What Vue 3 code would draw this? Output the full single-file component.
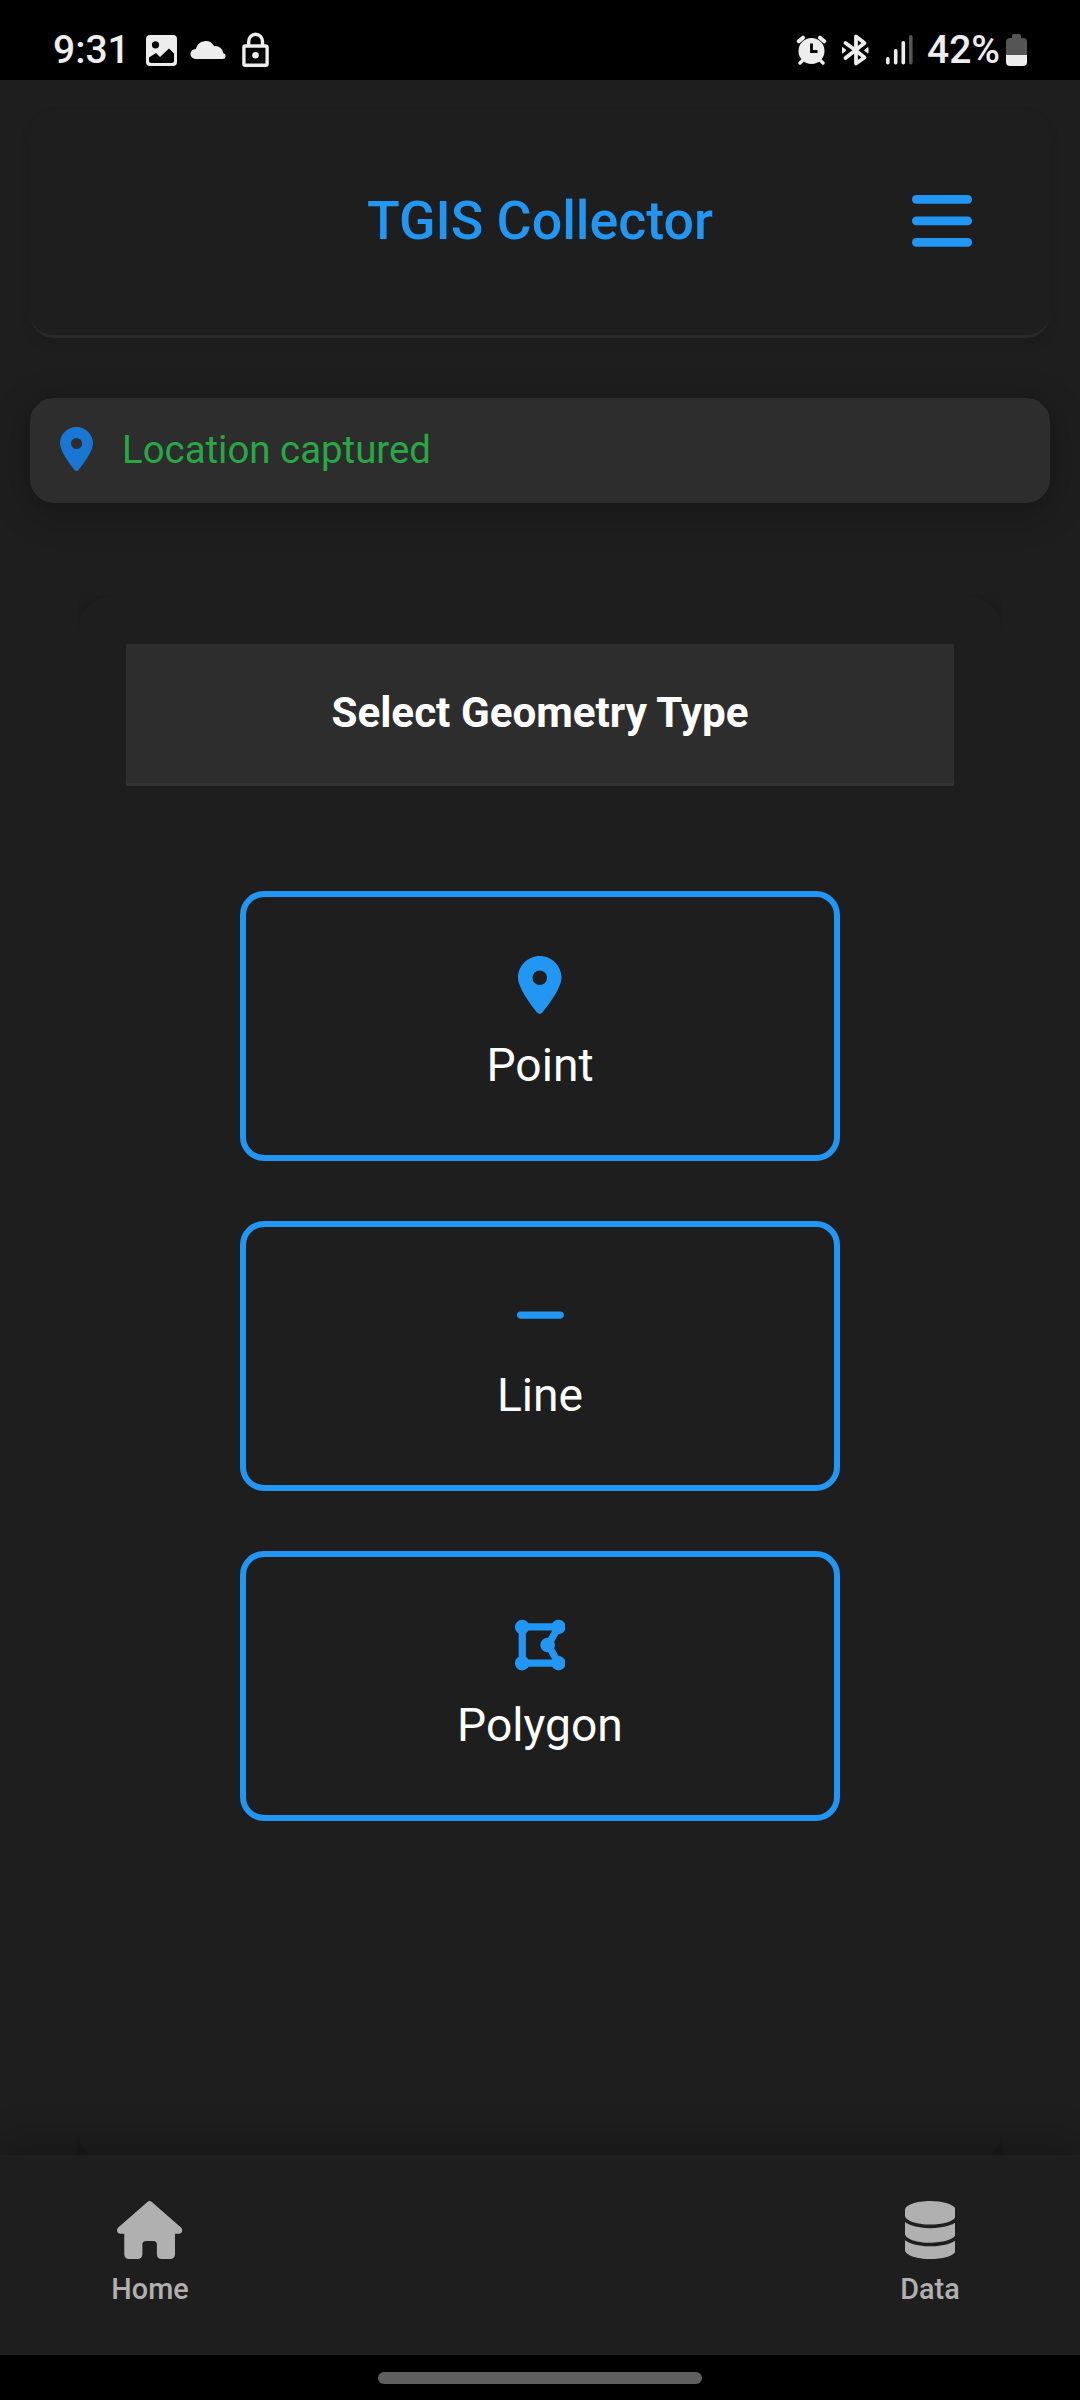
<script setup>
const pin = {
  viewBox: '0 0 384 512',
  width: 43.5,
  d: 'M215.7 499.2C267 435 384 279.4 384 192C384 86 298 0 192 0S0 86 0 192c0 87.4 117 243 168.3 307.2c12.3 15.3 35.1 15.3 47.4 0zM192 128a64 64 0 1 1 0 128 64 64 0 1 1 0-128z',
}

const geometries = [
  { label: 'Point', icon: pin },
  {
    label: 'Line',
    icon: {
      viewBox: '0 0 448 512',
      width: 50.75,
      d: 'M432 256c0 17.7-14.3 32-32 32L48 288c-17.7 0-32-14.3-32-32s14.3-32 32-32l352 0c17.7 0 32 14.3 32 32z',
    },
  },
  {
    label: 'Polygon',
    icon: {
      viewBox: '0 0 448 512',
      width: 50.75,
      d: 'M96 151.4V360.6c9.7 5.6 17.8 13.7 23.4 23.4H328.6c0-.1 .1-.2 .1-.3l-4.5-7.9-32-56 0 0c-1.4 .1-2.8 .1-4.2 .1c-35.3 0-64-28.7-64-64s28.7-64 64-64c1.4 0 2.8 0 4.2 .1l0 0 32-56 4.5-7.9-.1-.3H119.4c-5.6 9.7-13.7 17.8-23.4 23.4zM384.3 352c35.2 .2 63.7 28.7 63.7 64c0 35.3-28.7 64-64 64c-23.7 0-44.4-12.9-55.4-32H119.4c-11.1 19.1-31.7 32-55.4 32c-35.3 0-64-28.7-64-64c0-23.7 12.9-44.4 32-55.4V151.4C12.9 140.4 0 119.7 0 96C0 60.7 28.7 32 64 32c23.7 0 44.4 12.9 55.4 32H328.6c11.1-19.1 31.7-32 55.4-32c35.3 0 64 28.7 64 64c0 35.3-28.5 63.8-63.7 64l-4.5 7.9-32 56-2.3 4c4.2 8.5 6.5 18 6.5 28.1s-2.3 19.6-6.5 28.1l2.3 4 32 56 4.5 7.9z',
    },
  },
]

const tabs = [
  {
    label: 'Home',
    viewBox: '0 0 576 512',
    width: 65.25,
    d: 'M266 10Q288-8 310 10L565 233Q576 243 576 256A32 32 0 0 1 544 288H512V472A40 40 0 0 1 472 512H392A40 40 0 0 1 352 472V384A32 32 0 0 0 320 352H256A32 32 0 0 0 224 384V472A40 40 0 0 1 184 512H104A40 40 0 0 1 64 472V288H32A32 32 0 0 1 0 256Q0 243 11 233Z',
  },
  {
    label: 'Data',
    viewBox: '0 0 448 512',
    width: 50.75,
    d: 'M448 80v48c0 44.2-100.3 80-224 80S0 172.2 0 128V80C0 35.8 100.3 0 224 0S448 35.8 448 80zM393.2 214.7c20.8-7.4 39.9-16.9 54.8-28.6V288c0 44.2-100.3 80-224 80S0 332.2 0 288V186.1c14.9 11.8 34 21.2 54.8 28.6C99.7 230.7 159.5 240 224 240s124.3-9.3 169.2-25.3zM0 346.1c14.9 11.8 34 21.2 54.8 28.6C99.7 390.7 159.5 400 224 400s124.3-9.3 169.2-25.3c20.8-7.4 39.9-16.9 54.8-28.6V432c0 44.2-100.3 80-224 80S0 476.2 0 432V346.1z',
  },
]
</script>

<template>
  <div class="screen">
    <div class="status">
      <span class="clock">9:31</span>
      <svg class="st-left" width="126" height="40" viewBox="144 30 126 40" fill="#ededed">
        <path fill-rule="evenodd" d="M150 35h23a4 4 0 0 1 4 4v23a4 4 0 0 1-4 4h-23a4 4 0 0 1-4-4V39a4 4 0 0 1 4-4zM155.500 41.200a3.600 3.600 0 1 0 0 7.200a3.600 3.600 0 0 0 0-7.200zM149 57.500V60.500a2.500 2.500 0 0 0 2.500 2.500h20a2.500 2.500 0 0 0 2.500-2.500V53.500l-5-5-9 8.500-4-4z" />
        <path d="M195.500 59a5 5 0 0 1-.1-10q.3 0 .6-.2a9.800 9.800 0 0 1 18.200-2.600a8 8 0 0 1 9.200 7a2.950 2.950 0 0 1-.4 5.800z" />
        <g fill="none" stroke="#ededed" stroke-width="3.400">
          <rect x="243.900" y="46" width="23.200" height="19.300" rx="1.500" />
          <path d="M248.700 46v-4.500a6.900 7.300 0 0 1 13.800 0v4.500" />
        </g>
        <circle cx="255.500" cy="55.300" r="3.300" />
      </svg>
      <svg class="st-right" width="118" height="40" viewBox="796 30 118 40" fill="#ededed">
        <circle cx="811.500" cy="51" r="13" />
        <path d="M802.500 60.500l-2.500 2.500M820.500 60.500l2.500 2.500" stroke="#ededed" stroke-width="3.500" stroke-linecap="round" />
        <path d="M798.800 41.300l4.200-3.600M824.200 41.300l-4.200-3.600" stroke="#ededed" stroke-width="4" stroke-linecap="round" />
        <path d="M811.500 43.500v8h6" fill="none" stroke="#000" stroke-width="2.800" />
        <path d="M845.500 43L855.500 50.200L864.500 57.500L856 63.500V36.500L864.500 43L855.500 50.200L845.500 58" fill="none" stroke="#ededed" stroke-width="3.800" stroke-linejoin="round" stroke-linecap="round" />
        <path d="M842.500 47.500l3.500 2.800-3.500 2.800zM868 47.500l-3.500 2.800 3.500 2.800z" stroke="#ededed" stroke-width="1" stroke-linejoin="round" />
        <rect x="886" y="57" width="3.600" height="7.500" rx="1.700" />
        <rect x="893.900" y="49" width="3.600" height="15.500" rx="1.700" />
        <rect x="901.500" y="41" width="3.600" height="23.500" rx="1.700" />
        <rect x="909" y="35" width="3.600" height="29.500" rx="1.700" fill="#555" />
      </svg>
      <span class="percent">42%</span>
      <svg class="battery" width="21" height="32" viewBox="0 0 21 32">
        <path d="M6 4V1.500A1.500 1.500 0 0 1 7.500 0h6A1.500 1.500 0 0 1 15 1.500V4h2a4 4 0 0 1 4 4v13H0V8a4 4 0 0 1 4-4z" fill="#555" />
        <path d="M0 21h21v7a4 4 0 0 1-4 4H4a4 4 0 0 1-4-4z" fill="#ededed" />
      </svg>
    </div>

    <header class="header">
      <h1 class="title">TGIS Collector</h1>
      <svg class="menu" width="60" height="52" viewBox="0 0 60 52" fill="#2196f3">
        <rect width="60" height="8.700" rx="4.300" />
        <rect y="21.600" width="60" height="8.700" rx="4.300" />
        <rect y="43" width="60" height="8.700" rx="4.300" />
      </svg>
    </header>

    <div class="location">
      <svg class="loc-pin" width="33" height="44" :viewBox="pin.viewBox"><path :d="pin.d" fill="#1976d2" /></svg>
      <span class="loc-text">Location captured</span>
    </div>

    <div class="clip">
      <main class="card">
        <h2 class="card-head">Select Geometry Type</h2>
        <div class="options">
          <button v-for="g in geometries" :key="g.label" class="option">
            <svg :width="g.icon.width" height="58" :viewBox="g.icon.viewBox"><path :d="g.icon.d" fill="#2196f3" /></svg>
            <span class="option-label">{{ g.label }}</span>
          </button>
        </div>
      </main>
    </div>

    <nav class="nav">
      <div v-for="t in tabs" :key="t.label" class="tab">
        <svg :width="t.width" height="58" :viewBox="t.viewBox"><path :d="t.d" fill="#b0b0b0" /></svg>
        <span class="tab-label">{{ t.label }}</span>
      </div>
    </nav>
    <div class="gesture"><div class="pill"></div></div>
  </div>
</template>

<style>
body {
  background: #1e1e1e;
}
</style>

<style scoped>
.screen {
  width: 1080px;
  height: 2400px;
  overflow: hidden;
  display: flex;
  flex-direction: column;
  background: #1e1e1e;
  font-family: Roboto, "Noto Sans", sans-serif;
}
svg {
  display: block;
  flex: none;
}
.status {
  flex: none;
  height: 80px;
  box-sizing: border-box;
  padding: 20px 53px 0 53px;
  display: flex;
  align-items: center;
  background: #000;
  color: #ededed;
  font-size: 39px;
  font-weight: 500;
  line-height: 60px;
}
.clock {
  width: 91px;
}
.st-right {
  margin-left: auto;
}
.percent {
  width: 79px;
  margin-left: 13px;
  white-space: nowrap;
}
.header {
  flex: none;
  box-sizing: border-box;
  height: 228px;
  margin: 30px 30px 0;
  padding: 0 78px;
  border-bottom: 3px solid #2a2a2a;
  border-radius: 24px;
  background: #1e1e1e;
  box-shadow: 0 6px 12px rgba(0, 0, 0, 0.08);
  display: grid;
  grid-template-columns: 60px 1fr 60px;
  align-items: center;
}
.title {
  grid-column: 2;
  margin: 0 0 4px;
  text-align: center;
  color: #2196f3;
  font-size: 53.7px;
  font-weight: 500;
  line-height: 64px;
}
.menu {
  margin-bottom: 3px;
}
.location {
  flex: none;
  box-sizing: border-box;
  height: 105px;
  margin: 60px 30px 0;
  padding: 0 30px 2px;
  border-radius: 24px;
  background: #2d2d2d;
  box-shadow: 0 8px 36px rgba(0, 0, 0, 0.3);
  display: flex;
  align-items: center;
  gap: 29px;
}
.loc-pin {
  margin-bottom: 2px;
}
.loc-text {
  color: #28a745;
  font-size: 38.4px;
  line-height: 46px;
}
.clip {
  flex: none;
  box-sizing: border-box;
  height: 1560px;
  margin: 92px 78px 0;
  overflow: hidden;
}
.card {
  box-sizing: border-box;
  height: 1571px;
  padding: 49px 48px 0;
  border-radius: 36px;
  background: #1e1e1e;
  box-shadow: 0 6px 24px rgba(0, 0, 0, 0.2);
}
.card-head {
  box-sizing: border-box;
  height: 142px;
  margin: 0;
  border-bottom: 3px solid #333;
  background: #2d2d2d;
  color: #fff;
  font-size: 42.2px;
  font-weight: 700;
  line-height: 137px;
  text-align: center;
}
.options {
  padding-top: 105px;
  display: flex;
  flex-direction: column;
  align-items: center;
  gap: 60px;
}
.option {
  box-sizing: border-box;
  width: 600px;
  height: 270px;
  margin: 0;
  padding: 59px 0 0;
  border: 6px solid #2196f3;
  border-radius: 24px;
  background: #1e1e1e;
  display: flex;
  flex-direction: column;
  align-items: center;
  justify-content: flex-start;
  font-family: inherit;
}
.option-label {
  margin-top: 24px;
  color: #fff;
  font-size: 46.2px;
  line-height: 55px;
}
.nav {
  flex: none;
  position: relative;
  box-sizing: border-box;
  height: 200px;
  padding: 46px 90px 0;
  background: #1e1e1e;
  box-shadow: 0 -8px 36px rgba(0, 0, 0, 0.3);
  display: flex;
  justify-content: space-between;
}
.tab {
  width: 120px;
  display: flex;
  flex-direction: column;
  align-items: center;
}
.tab-label {
  margin-top: 12px;
  color: #b0b0b0;
  font-size: 28.8px;
  font-weight: 500;
  line-height: 36px;
}
.gesture {
  flex: none;
  position: relative;
  height: 45px;
  box-sizing: border-box;
  padding-top: 17px;
  background: #000;
}
.pill {
  width: 324px;
  height: 12px;
  margin: 0 auto;
  border-radius: 6px;
  background: #5f5f5f;
}
</style>
